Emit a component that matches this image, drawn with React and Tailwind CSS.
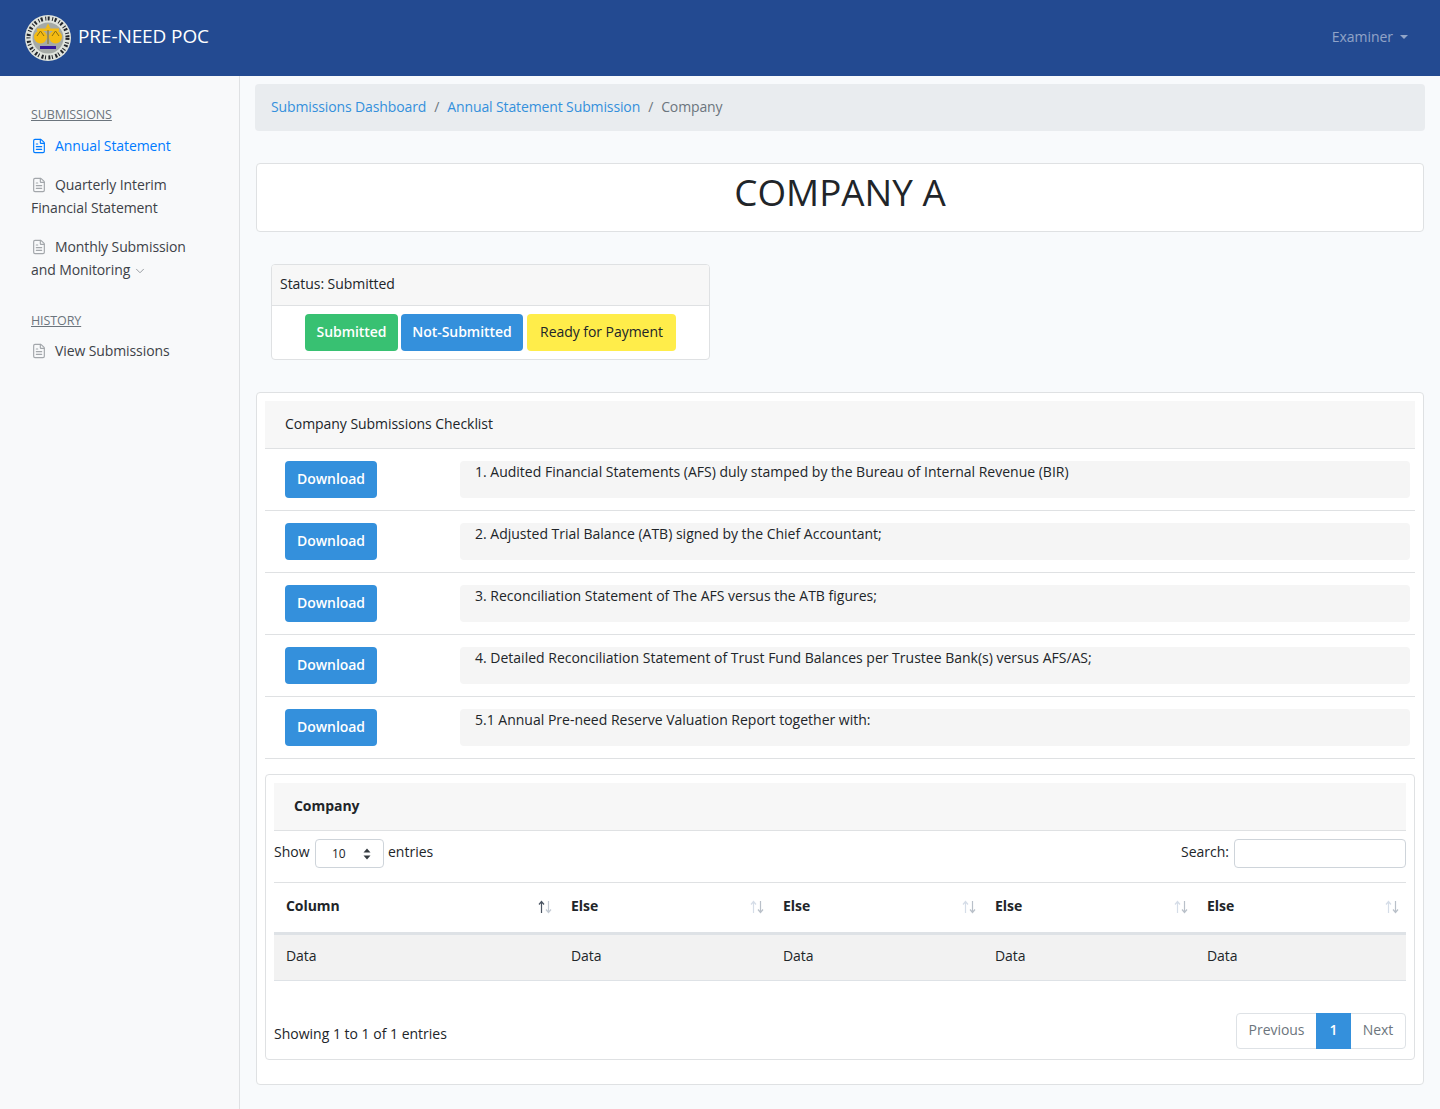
import React from 'react';
import { FileText, ChevronDown } from 'lucide-react';

const checklist = [
  '1. Audited Financial Statements (AFS) duly stamped by the Bureau of Internal Revenue (BIR)',
  '2. Adjusted Trial Balance (ATB) signed by the Chief Accountant;',
  '3. Reconciliation Statement of The AFS versus the ATB figures;',
  '4. Detailed Reconciliation Statement of Trust Fund Balances per Trustee Bank(s) versus AFS/AS;',
  '5.1 Annual Pre-need Reserve Valuation Report together with:',
];

const columns = ['Column', 'Else', 'Else', 'Else', 'Else'];

const Seal = () => (
  <svg viewBox="0 0 46 46" className="w-[46px] h-[46px] shrink-0">
    <circle cx="23" cy="23" r="23" fill="#dfe3dc" />
    <circle cx="23" cy="23" r="19.500" fill="none" stroke="#23262b" strokeWidth="4" strokeDasharray="2 2.500 1 1.500" />
    <circle cx="23" cy="23" r="15.500" fill="#a5aaa6" />
    <path d="M12 13.500h22v2.500H12z" fill="#f4bb12" />
    <path d="M23 8.500l2.500 5h-5z" fill="#f4bb12" />
    <circle cx="15.500" cy="22" r="6.500" fill="#f4bb12" />
    <circle cx="30.500" cy="22" r="6.500" fill="#f4bb12" />
    <path d="M23 15v14M12 21l3.500-5 3.500 5M27 21l3.500-5 3.500 5" stroke="#8a6d10" strokeWidth="1" fill="none" />
    <path d="M15 31h16v3H15z" fill="#35199a" />
  </svg>
);

const SortIcon = ({ active }) => (
  <svg viewBox="0 0 16 14" className="w-4 h-[14px]">
    <path d="M4.500 13V2M2 4.500L4.500 1.500 7 4.500" fill="none" stroke={active ? '#4b5563' : '#d5dde8'} strokeWidth="1.200" />
    <path d="M11.500 1v11M9 9.500L11.500 12.500 14 9.500" fill="none" stroke={active ? '#c3cad3' : '#b9c0c9'} strokeWidth="1.200" />
  </svg>
);

const NavItem = ({ children, active }) => (
  <a href="#" className={`block leading-[23px] ${active ? 'text-[#007bff]' : 'text-[#3d4248]'}`}>
    {children}
  </a>
);

const NavIcon = ({ active }) => (
  <FileText
    strokeWidth={1.750}
    className={`inline-block w-4 h-4 mr-2 align-[-3px] ${active ? 'text-[#007bff]' : 'text-[#a3a7ab]'}`}
  />
);

const App = () => {
  return (
    <div className="min-h-screen bg-[#f8fafc] text-[14px] tracking-[-0.05px] leading-[23px] text-[#212529] font-['Open_Sans','Liberation_Sans',sans-serif]">
      <header className="h-[76px] bg-[#234a91] flex items-center justify-between pl-[25px] pr-[32px]">
        <a href="#" className="flex items-center gap-[7px] text-white text-[19px] font-medium tracking-[-0.1px]">
          <Seal />
          <span className="pb-[3px]">PRE-NEED POC</span>
        </a>
        <button className="flex items-center gap-[7px] pb-[3px] text-white/50">
          Examiner
          <span className="border-x-[4px] border-x-transparent border-t-[4px] border-t-white/50" />
        </button>
      </header>

      <div className="flex">
        <aside className="w-[240px] shrink-0 border-r border-[#dfe1e3] bg-[#f8f9fa] pl-[31px] pr-[40px] pt-[31px] tracking-[-0.1px]">
          <h6 className="text-[12.500px] leading-[16px] text-[#6c757d] underline">SUBMISSIONS</h6>
          <ul className="mt-[11px] flex flex-col gap-4">
            <li>
              <NavItem active><NavIcon active />Annual Statement</NavItem>
            </li>
            <li>
              <NavItem><NavIcon />Quarterly Interim Financial Statement</NavItem>
            </li>
            <li>
              <NavItem>
                <NavIcon />Monthly Submission and Monitoring
                <ChevronDown strokeWidth={1.500} className="inline-block w-[14px] h-[14px] ml-[3px] align-[-3px] text-[#8a8f95]" />
              </NavItem>
            </li>
          </ul>
          <h6 className="mt-[32px] text-[12.500px] leading-[16px] text-[#6c757d] underline">HISTORY</h6>
          <ul className="mt-[10px]">
            <li>
              <NavItem><NavIcon />View Submissions</NavItem>
            </li>
          </ul>
        </aside>

        <main className="flex-1 pl-[15px] pr-[15px] pt-2 pb-6">
          <nav className="h-[47px] bg-[#e9ecef] rounded px-4 pb-[2px] flex items-center tracking-[-0.12px]">
            <a href="#" className="text-[#3490dc]">Submissions Dashboard</a>
            <span className="px-2 text-[#6c757d]">/</span>
            <a href="#" className="text-[#3490dc]">Annual Statement Submission</a>
            <span className="px-2 text-[#6c757d]">/</span>
            <span className="text-[#6c757d]">Company</span>
          </nav>

          <section className="mt-8 mx-px h-[69px] bg-white border border-[#dfe1e3] rounded flex items-start justify-center">
            <h1 className="text-[36.800px] tracking-normal leading-[56px] text-[#212529]">COMPANY A</h1>
          </section>

          <section className="mt-8 ml-4 w-[439px] bg-white border border-[#dfe1e3] rounded overflow-hidden">
            <div className="h-[41px] px-2 pb-[3px] flex items-center bg-[#f7f7f7] border-b border-[#dfe1e3]">Status: Submitted</div>
            <div className="h-[53px] flex items-center justify-center gap-[3px]">
              <button className="w-[93px] h-[37px] pb-[2px] rounded bg-[#38c172] text-white font-semibold">Submitted</button>
              <button className="w-[122px] h-[37px] pb-[2px] rounded bg-[#3490dc] text-white font-semibold">Not-Submitted</button>
              <button className="w-[149px] h-[37px] pb-[2px] ml-px rounded bg-[#ffed4a] text-[#212529]">Ready for Payment</button>
            </div>
          </section>

          <section className="mt-8 mx-px bg-white border border-[#dfe1e3] rounded p-2 pb-6">
            <div className="h-[48px] pl-5 pb-[2px] flex items-center bg-[#f7f7f7] border-b border-[#dfe1e3]">Company Submissions Checklist</div>

            {checklist.map((item) => (
              <div key={item} className="h-[62px] flex items-center pl-5 pr-[5px] border-b border-[#dfe1e3]">
                <button className="w-[92px] h-[37px] pb-[2px] shrink-0 rounded bg-[#3490dc] text-white font-semibold">Download</button>
                <div className="ml-[83px] flex-1 h-[37px] pl-[15px] leading-[21px] tracking-normal bg-[#f5f5f5] rounded-sm">{item}</div>
              </div>
            ))}

            <div className="mt-[15px] border border-[#dfe1e3] rounded p-2 h-[286px] flex flex-col">
              <div className="h-[48px] pl-5 pb-[2px] flex items-center bg-[#f7f7f7] border-b border-[#dfe1e3] font-bold">Company</div>

              <div className="h-[52px] flex justify-between pt-2 border-b border-[#dfe1e3] tracking-normal">
                <div className="flex items-start">
                  <span className="mt-px w-[41px]">Show</span>
                  <div className="w-[69px] h-[29px] pl-4 pr-3 border border-[#ced4da] rounded bg-white flex items-center justify-between text-[12px]">
                    <span>10</span>
                    <svg viewBox="0 0 8 12" className="w-2 h-3 fill-[#343a40]">
                      <path d="M4 0.500L7.500 4.500H0.500zM4 11.500L0.500 7.500H7.500z" />
                    </svg>
                  </div>
                  <span className="mt-px ml-1">entries</span>
                </div>
                <div className="flex items-start gap-[5px]">
                  <span className="mt-px">Search:</span>
                  <input className="w-[172px] h-[29px] border border-[#ced4da] rounded bg-white" aria-label="Search" />
                </div>
              </div>

              <table className="w-full table-fixed border-collapse">
                <colgroup>
                  <col className="w-[285px]" />
                  <col className="w-[212px]" />
                  <col className="w-[212px]" />
                  <col className="w-[212px]" />
                  <col />
                </colgroup>
                <thead>
                  <tr className="h-[50px] border-b-[3px] border-[#dee2e6]">
                    {columns.map((col, i) => (
                      <th key={i} className="px-3 text-left font-bold">
                        <div className="flex items-center justify-between">
                          <span className="pb-[4px]">{col}</span>
                          <span className="-mr-[6px]"><SortIcon active={i === 0} /></span>
                        </div>
                      </th>
                    ))}
                  </tr>
                </thead>
                <tbody>
                  <tr className="h-[47px] bg-[#f2f2f2] border-b border-[#dee2e6]">
                    {columns.map((col, i) => (
                      <td key={i} className="px-3 pb-[3px]">Data</td>
                    ))}
                  </tr>
                </tbody>
              </table>

              <div className="mt-auto flex justify-between items-end pb-[2px]">
                <span className="-mb-[2px] pb-[6px] tracking-normal">Showing 1 to 1 of 1 entries</span>
                <div className="h-[36px] flex border border-[#dee2e6] rounded text-[#6c757d]">
                  <span className="w-[79px] pb-[4px] flex items-center justify-center">Previous</span>
                  <span className="w-[35px] -my-px pb-[4px] flex items-center justify-center bg-[#3490dc] text-white font-semibold">1</span>
                  <span className="w-[54px] pb-[4px] flex items-center justify-center">Next</span>
                </div>
              </div>
            </div>
          </section>
        </main>
      </div>
    </div>
  );
};

export default App;
